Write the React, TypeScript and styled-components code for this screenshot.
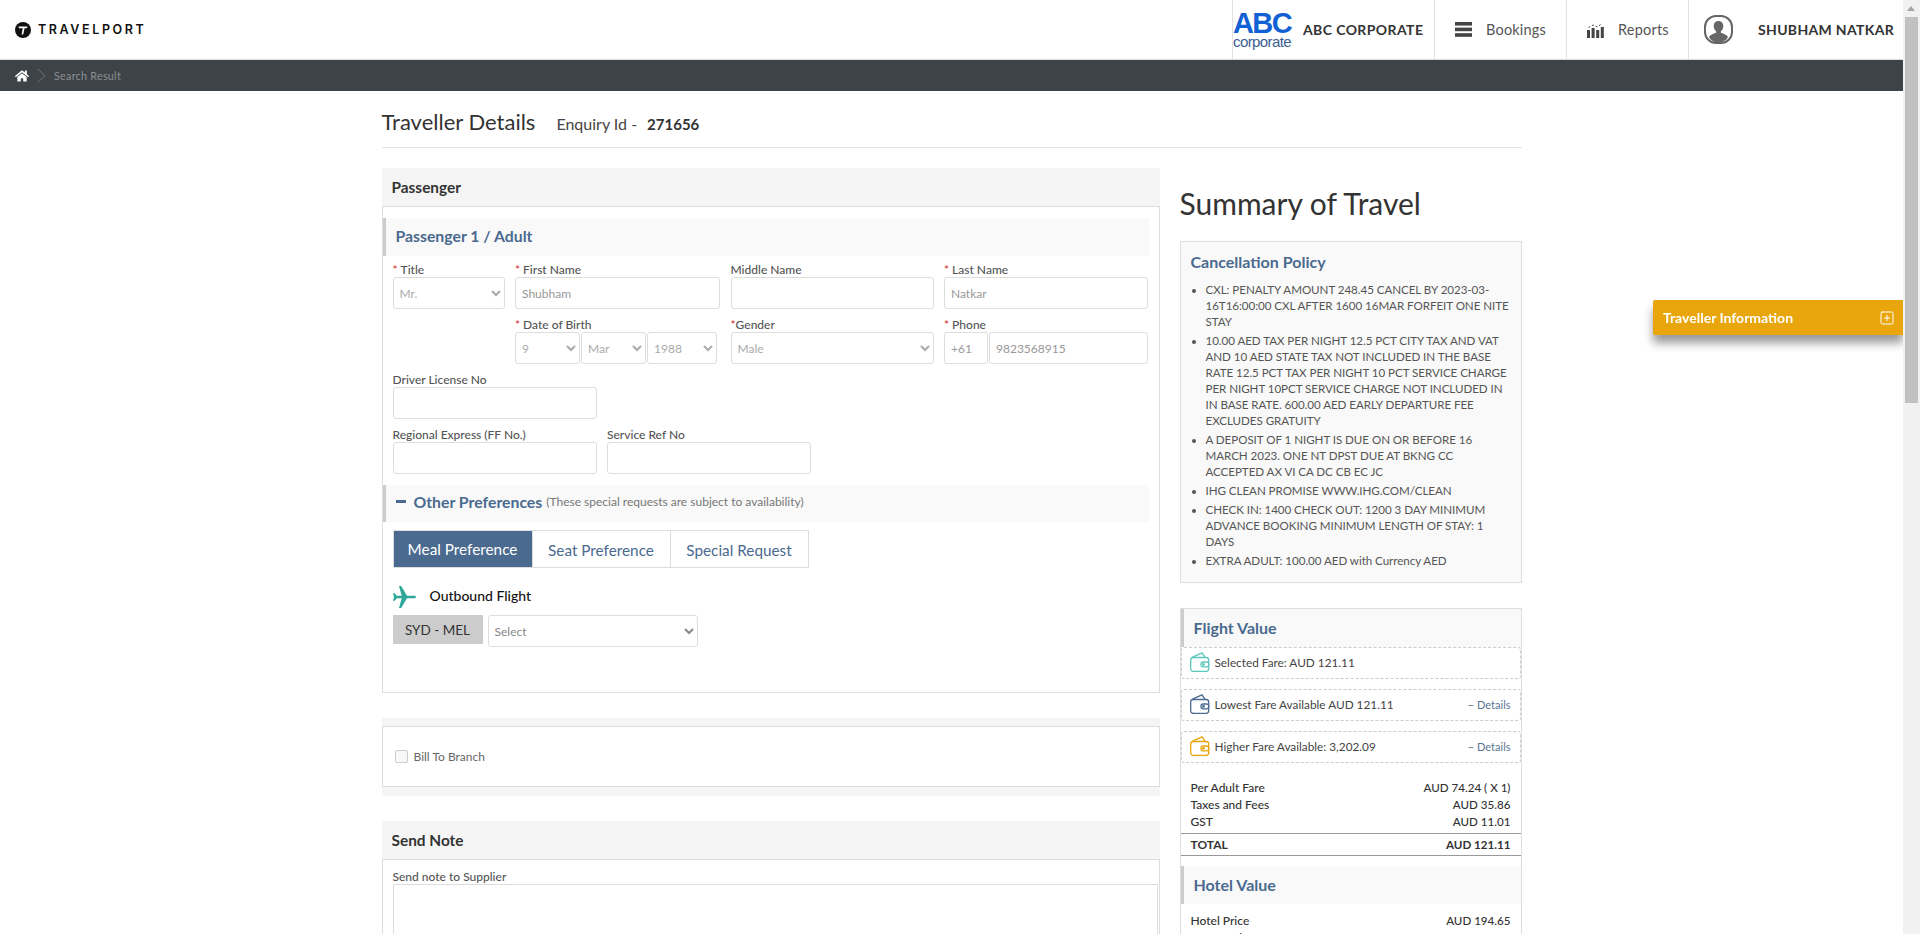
import React from 'react';
import styled, { createGlobalStyle } from 'styled-components';
import { FaHome } from 'react-icons/fa';
import { SquarePlus } from 'lucide-react';

const Global = createGlobalStyle`
  html, body { margin: 0; padding: 0; height: 934px; overflow: hidden; background: #fff; }
  body { font-family: Lato, "Open Sans", Arial, sans-serif; color: #333; }
  * { box-sizing: border-box; }
`;

const Page = styled.div`
  width: 1903px;
  height: 934px;
  overflow: hidden;
`;

const TopBar = styled.header`
  height: 60px;
  display: flex;
  align-items: stretch;
  justify-content: space-between;
  border-bottom: 1px solid #ddd;
  background: #fff;
`;

const Brand = styled.div`
  display: flex;
  align-items: center;
  gap: 7px;
  padding-left: 15px;
`;

const BrandName = styled.span`
  font-family: Inter, Arial, sans-serif;
  font-size: 12.5px;
  font-weight: 600;
  letter-spacing: 2.6px;
  color: #111;
`;

const TopNav = styled.nav`
  display: flex;
  align-items: stretch;
`;

const NavCell = styled.div<{ $w: number; $gap: number; $pl: number }>`
  width: ${p => p.$w}px;
  display: flex;
  align-items: center;
  gap: ${p => p.$gap}px;
  padding-left: ${p => p.$pl}px;
  border-left: 1px solid #e2e2e2;
`;

const CorpLogo = styled.div`
  width: 58px;
  display: flex;
  flex-direction: column;
  align-items: center;
  font-family: "Liberation Sans", Arial, sans-serif;
  line-height: 1;
`;

const CorpAbc = styled.span`
  font-size: 29px;
  font-weight: 700;
  letter-spacing: -1.6px;
  line-height: 25px;
  color: #1260d6;
`;

const CorpWord = styled.span`
  font-size: 15px;
  letter-spacing: -0.6px;
  line-height: 12px;
  color: #3c5d92;
`;

const CorpName = styled.span`
  font-size: 14px;
  font-weight: 700;
  letter-spacing: 0.4px;
  color: #333;
`;

const NavLink = styled.span`
  font-size: 14.5px;
  color: #555;
  letter-spacing: 0.2px;
`;

const UserName = styled.span`
  font-size: 14px;
  font-weight: 700;
  letter-spacing: 0.33px;
  color: #333;
`;

const Crumbs = styled.div`
  height: 31px;
  background: #3e4347;
  display: flex;
  align-items: center;
  gap: 8px;
  padding-left: 15px;
  color: #fff;
`;

const CrumbText = styled.span`
  font-size: 10.8px;
  color: #8a8f93;
  letter-spacing: 0.25px;
`;

const Wrap = styled.main`
  width: 1140px;
  margin: 0 auto;
`;

const TitleRow = styled.div`
  height: 57px;
  padding-top: 17px;
  display: flex;
  align-items: baseline;
  border-bottom: 1px solid #e4e4e4;
`;

const PageTitle = styled.h1`
  margin: 0 21px 0 0;
  font-size: 22px;
  font-weight: 400;
  color: #333;
`;

const EnquiryLabel = styled.span`
  font-size: 16px;
  color: #444;
`;

const EnquiryId = styled.b`
  margin-left: 10px;
  font-size: 15px;
  color: #333;
`;

const Columns = styled.div`
  display: grid;
  grid-template-columns: 778px 342px;
  column-gap: 20px;
  margin-top: 20px;
`;

const Panel = styled.section<{ $gap?: number }>`
  margin-top: ${p => p.$gap ?? 0}px;
`;

const PanelHead = styled.div`
  height: 38px;
  display: flex;
  align-items: center;
  padding-left: 10px;
  background: #f5f5f5;
  font-size: 15.4px;
  font-weight: 700;
  color: #333;
`;

const PanelBody = styled.div`
  border: 1px solid #ddd;
  padding: 11px 10px 45px 0;
  background: #fff;
`;

const SubHead = styled.div<{ $h: number }>`
  height: ${p => p.$h}px;
  display: flex;
  align-items: center;
  padding: 0 0 4px 10px;
  background: #f9f9f9;
  border-left: 3px solid #ccc;
  font-size: 15.8px;
  font-weight: 700;
  color: #4a6a8f;
`;

const FormGrid = styled.div`
  margin: 6px 0 0 10px;
  display: grid;
  grid-template-columns: 112px 205px 203px 203.5px;
  column-gap: 10.5px;
  row-gap: 8px;
`;

const Field = styled.div<{ $col?: number }>`
  grid-column: ${p => p.$col ?? 'auto'};
  min-width: 0;
`;

const Label = styled.label`
  display: block;
  height: 15px;
  line-height: 15px;
  font-size: 12px;
  font-weight: 500;
  color: #555;
  white-space: nowrap;
`;

const Req = styled.span<{ $tight?: boolean }>`
  color: #d33;
  margin-right: ${p => (p.$tight ? 0 : 3)}px;
`;

const TextInput = styled.input`
  display: block;
  width: 100%;
  height: 32px;
  padding: 0 6px;
  border: 1px solid #ddd;
  border-radius: 3px;
  background: #fff;
  font: 12px Lato, Arial, sans-serif;
  color: #999;
  outline: none;
`;

const Select = styled.select`
  display: block;
  width: 100%;
  min-width: 0;
  height: 32px;
  padding: 0 2px;
  border: 1px solid #ddd;
  border-radius: 3px;
  background: #fff;
  font: 12px Lato, Arial, sans-serif;
  color: #aaa;
  opacity: 1;
`;

const DobGroup = styled.div`
  display: grid;
  grid-template-columns: 65px 65px 70px;
  column-gap: 1px;
`;

const PhoneGroup = styled.div`
  display: grid;
  grid-template-columns: 44px 1fr;
  column-gap: 1px;
`;

const PairRow = styled.div`
  margin: 8px 0 0 10px;
  display: grid;
  grid-template-columns: 204px 204px;
  column-gap: 10.5px;
`;

const SingleRow = styled.div`
  margin: 8px 0 0 10px;
  width: 204px;
`;

const PrefHead = styled(SubHead)`
  margin-top: 11px;
  gap: 8px;
`;

const Minus = styled.span`
  width: 10px;
  height: 3px;
  background: #4a6a8f;
`;

const PrefNote = styled.span`
  margin-left: -4px;
  font-size: 12px;
  font-weight: 400;
  color: #777;
`;

const Tabs = styled.div`
  margin: 8px 0 0 10px;
  width: 416px;
  height: 38px;
  display: grid;
  grid-template-columns: repeat(3, 1fr);
  border: 1px solid #ddd;
`;

const Tab = styled.div<{ $on?: boolean }>`
  display: flex;
  align-items: center;
  justify-content: center;
  padding-top: ${p => (p.$on ? 0 : 2)}px;
  font-size: 15.3px;
  color: ${p => (p.$on ? '#fff' : '#4a6a8f')};
  background: ${p => (p.$on ? '#4a6a8f' : '#fff')};
  border-left: ${p => (p.$on ? 'none' : '1px solid #ddd')};
`;

const FlightLine = styled.div`
  margin: 18px 0 0 10px;
  height: 22px;
  display: flex;
  align-items: center;
  gap: 14px;
  font-size: 14px;
  font-weight: 500;
  color: #111;
`;

const FlightName = styled.span`
  padding-bottom: 3px;
`;

const RouteRow = styled.div`
  margin: 7px 0 0 10px;
  display: flex;
  align-items: flex-start;
  gap: 5px;
`;

const RouteTag = styled.div`
  width: 90px;
  height: 29px;
  display: flex;
  align-items: center;
  justify-content: center;
  background: #ccc;
  font-size: 13.5px;
  color: #333;
`;

const RouteSelect = styled(Select)`
  width: 210px;
  color: #888;
`;

const BillBlock = styled.section`
  margin-top: 25px;
  padding: 8px 0 9px;
  background: #f5f5f5;
`;

const BillBox = styled.div`
  height: 61px;
  display: flex;
  align-items: center;
  gap: 6px;
  padding-left: 12px;
  border: 1px solid #ddd;
  background: #fff;
  font-size: 12px;
  color: #666;
`;

const Check = styled.span`
  width: 13px;
  height: 13px;
  border: 1px solid #ccc;
  border-radius: 2px;
  background: #f8f8f8;
`;

const NoteBody = styled.div`
  height: 120px;
  border: 1px solid #ddd;
  border-bottom: none;
  padding: 9px 1px 0 10px;
`;

const NoteArea = styled.div`
  height: 100px;
  border: 1px solid #ddd;
`;

const SummaryTitle = styled.h2`
  margin: 0 0 3px;
  height: 70px;
  line-height: 70px;
  font-size: 30px;
  font-weight: 400;
  color: #333;
`;

const PolicyBox = styled.div`
  height: 342px;
  padding: 10px 10px 0;
  border: 1px solid #ddd;
  background: #f9f9f9;
`;

const PolicyTitle = styled.h3`
  margin: 0 0 10px;
  line-height: 20px;
  font-size: 16px;
  font-weight: 700;
  color: #4a6a8f;
`;

const PolicyList = styled.ul`
  margin: 0;
  padding-left: 15px;
`;

const PolicyItem = styled.li`
  margin-bottom: 3px;
  font-size: 11.6px;
  line-height: 16px;
  letter-spacing: -0.05px;
  white-space: nowrap;
  color: #555;
`;

const PolicyLine = styled.span`
  display: block;
`;

const ValueBox = styled.div`
  margin-top: 25px;
  border: 1px solid #ddd;
  border-bottom: none;
  padding-bottom: 20px;
`;

const ValueHead = styled.div`
  height: 38px;
  display: flex;
  align-items: center;
  padding: 0 0 2px 10px;
  background: #f9f9f9;
  border-left: 3px solid #ccc;
  font-size: 16px;
  font-weight: 700;
  color: #4a6a8f;
`;

const FareLine = styled.div<{ $gap?: number }>`
  margin-top: ${p => p.$gap ?? 0}px;
  height: 32px;
  display: flex;
  align-items: center;
  gap: 5px;
  padding: 0 9px 2px 8px;
  border: 1px dashed #ccc;
  border-radius: 3px;
  font-size: 11.8px;
  color: #444;
`;

const DetailsLink = styled.span`
  margin-left: auto;
  font-size: 11px;
  color: #5a7594;
`;

const PriceRows = styled.div<{ $top: number }>`
  margin-top: ${p => p.$top}px;
`;

const PriceRow = styled.div<{ $total?: boolean }>`
  height: ${p => (p.$total ? 23 : 17)}px;
  margin-top: ${p => (p.$total ? 3 : 0)}px;
  display: flex;
  align-items: center;
  justify-content: space-between;
  padding: 0 10px 0 10px;
  font-size: 12px;
  font-weight: ${p => (p.$total ? 700 : 500)};
  color: #333;
  border-top: ${p => (p.$total ? '1px solid #999' : 'none')};
  border-bottom: ${p => (p.$total ? '1px solid #999' : 'none')};
`;

const Amount = styled.span`
  font-size: 11.6px;
`;

const HotelHead = styled(ValueHead)`
  margin-top: 10px;
`;

const Drawer = styled.div`
  position: fixed;
  top: 300px;
  left: 1653px;
  width: 250px;
  height: 35px;
  display: flex;
  align-items: center;
  justify-content: space-between;
  padding: 0 8px 0 10px;
  background: #e8a60c;
  border-radius: 2px 0 0 2px;
  box-shadow: 0 8px 10px rgba(0, 0, 0, 0.4);
  font-size: 14px;
  font-weight: 700;
  color: #fff;
`;

const Track = styled.div`
  position: fixed;
  top: 0;
  right: 0;
  width: 17px;
  height: 934px;
  background: #f1f1f1;
`;

const Thumb = styled.div`
  position: absolute;
  top: 17px;
  left: 2px;
  width: 13px;
  height: 386px;
  background: #c1c1c1;
`;

const Arrow = styled.div`
  position: absolute;
  top: 6px;
  left: 4px;
  border-left: 4.5px solid transparent;
  border-right: 4.5px solid transparent;
  border-bottom: 5px solid #a3a3a3;
`;

const TravelportMark = () => (
  <svg width="16" height="16" viewBox="0 0 16 16">
    <circle cx="8" cy="8" r="8" fill="#111" />
    <path d="M3.5 4.6h9l-.6 1.6H9.6L8.2 12.4H6.6l1.2-6.2H4z" fill="#fff" />
  </svg>
);

const BarsIcon = () => (
  <svg width="17" height="15" viewBox="0 0 17 15" fill="#444">
    <rect width="17" height="3.6" />
    <rect y="5.6" width="17" height="3.6" />
    <rect y="11.2" width="17" height="3.6" />
  </svg>
);

const ReportIcon = () => (
  <svg width="17" height="16" viewBox="0 0 17 16" fill="#444">
    <rect x="0" y="8" width="3" height="8" />
    <rect x="4.6" y="6" width="3" height="10" />
    <rect x="9.2" y="8" width="3" height="8" />
    <rect x="13.8" y="5" width="3" height="11" />
    <path d="M1.5 5.500 6 3l4.700 2L15 1.200" stroke="#444" strokeWidth="1" strokeDasharray="2 2" fill="none" />
  </svg>
);

const AvatarIcon = () => (
  <svg width="29" height="29" viewBox="0 0 29 29">
    <rect x="1" y="1" width="27" height="27" rx="11" fill="#fff" stroke="#666" strokeWidth="2" />
    <path d="M14.5 6c-3 0-4.8 2.2-4.8 5.1 0 2.3 1 4.2 2.4 5.2v1.5c-2.8 1-6 2-7.100 4.200C6.700 25.600 10.300 27.500 14.500 27.500s7.800-1.900 9.500-5.500c-1.100-2.200-4.300-3.200-7.100-4.200v-1.500c1.400-1 2.400-2.900 2.400-5.200C19.300 8.200 17.500 6 14.500 6z" fill="#666" />
  </svg>
);

const CrumbArrow = () => (
  <svg width="9" height="15" viewBox="0 0 9 15" fill="none" stroke="#6a6f73" strokeWidth="1">
    <path d="M1 1l7 7-7 6" />
  </svg>
);

const PlaneIcon = () => (
  <svg width="23" height="22" viewBox="0 0 23 22" fill="#2fa79b">
    <path d="M23 11c0-.8-1-1.300-2.200-1.300H14L8.200 0H6l2.700 9.700H3.600L1.700 7.200H0l1 3.800-1 3.800h1.700l1.900-2.500h5.100L6 22h2.200L14 12.300h6.800C22 12.300 23 11.800 23 11z" />
  </svg>
);

const WalletIcon = ({ color }: { color: string }) => (
  <svg width="20" height="20" viewBox="0 0 20 20" fill="none" stroke={color} strokeWidth="1.300">
    <rect x="0.700" y="5.500" width="18" height="13.800" rx="2.500" />
    <path d="M2.500 5.200 12 0.900 15 5.200" />
    <rect x="11" y="10" width="7.700" height="4.800" rx="2" fill="#fff" />
    <circle cx="13.500" cy="12.400" r="0.800" />
  </svg>
);

// line breaks follow the reference, the substitute font would wrap them differently
const policy = [
  ['CXL: PENALTY AMOUNT 248.45 CANCEL BY 2023-03-', '16T16:00:00 CXL AFTER 1600 16MAR FORFEIT ONE NITE', 'STAY'],
  [
    '10.00 AED TAX PER NIGHT 12.5 PCT CITY TAX AND VAT',
    'AND 10 AED STATE TAX NOT INCLUDED IN THE BASE',
    'RATE 12.5 PCT TAX PER NIGHT 10 PCT SERVICE CHARGE',
    'PER NIGHT 10PCT SERVICE CHARGE NOT INCLUDED IN',
    'IN BASE RATE. 600.00 AED EARLY DEPARTURE FEE',
    'EXCLUDES GRATUITY',
  ],
  ['A DEPOSIT OF 1 NIGHT IS DUE ON OR BEFORE 16', 'MARCH 2023. ONE NT DPST DUE AT BKNG CC', 'ACCEPTED AX VI CA DC CB EC JC'],
  ['IHG CLEAN PROMISE WWW.IHG.COM/CLEAN'],
  ['CHECK IN: 1400 CHECK OUT: 1200 3 DAY MINIMUM', 'ADVANCE BOOKING MINIMUM LENGTH OF STAY: 1', 'DAYS'],
  ['EXTRA ADULT: 100.00 AED with Currency AED'],
];

const Choice = ({ value }: { value: string }) => (
  <Select disabled defaultValue={value}>
    <option>{value}</option>
  </Select>
);

export default function App() {
  return (
    <Page>
      <Global />
      <TopBar>
        <Brand>
          <TravelportMark />
          <BrandName>TRAVELPORT</BrandName>
        </Brand>
        <TopNav>
          <NavCell $w={202} $gap={12} $pl={0}>
            <CorpLogo>
              <CorpAbc>ABC</CorpAbc>
              <CorpWord>corporate</CorpWord>
            </CorpLogo>
            <CorpName>ABC CORPORATE</CorpName>
          </NavCell>
          <NavCell $w={132} $gap={14} $pl={20}>
            <BarsIcon />
            <NavLink>Bookings</NavLink>
          </NavCell>
          <NavCell $w={122} $gap={14} $pl={20}>
            <ReportIcon />
            <NavLink>Reports</NavLink>
          </NavCell>
          <NavCell $w={215} $gap={25} $pl={15}>
            <AvatarIcon />
            <UserName>SHUBHAM NATKAR</UserName>
          </NavCell>
        </TopNav>
      </TopBar>
      <Crumbs>
        <FaHome size={14} />
        <CrumbArrow />
        <CrumbText>Search Result</CrumbText>
      </Crumbs>

      <Wrap>
        <TitleRow>
          <PageTitle>Traveller Details</PageTitle>
          <EnquiryLabel>Enquiry Id -</EnquiryLabel>
          <EnquiryId>271656</EnquiryId>
        </TitleRow>

        <Columns>
          <div>
            <Panel>
              <PanelHead>Passenger</PanelHead>
              <PanelBody>
                <SubHead $h={38}>Passenger 1 / Adult</SubHead>
                <FormGrid>
                  <Field>
                    <Label><Req>*</Req>Title</Label>
                    <Choice value="Mr." />
                  </Field>
                  <Field>
                    <Label><Req>*</Req>First Name</Label>
                    <TextInput readOnly defaultValue="Shubham" />
                  </Field>
                  <Field>
                    <Label>Middle Name</Label>
                    <TextInput readOnly />
                  </Field>
                  <Field>
                    <Label><Req>*</Req>Last Name</Label>
                    <TextInput readOnly defaultValue="Natkar" />
                  </Field>
                  <Field $col={2}>
                    <Label><Req>*</Req>Date of Birth</Label>
                    <DobGroup>
                      <Choice value="9" />
                      <Choice value="Mar" />
                      <Choice value="1988" />
                    </DobGroup>
                  </Field>
                  <Field>
                    <Label><Req $tight>*</Req>Gender</Label>
                    <Choice value="Male" />
                  </Field>
                  <Field>
                    <Label><Req>*</Req>Phone</Label>
                    <PhoneGroup>
                      <TextInput readOnly defaultValue="+61" />
                      <TextInput readOnly defaultValue="9823568915" />
                    </PhoneGroup>
                  </Field>
                </FormGrid>
                <SingleRow>
                  <Label>Driver License No</Label>
                  <TextInput readOnly />
                </SingleRow>
                <PairRow>
                  <Field>
                    <Label>Regional Express (FF No.)</Label>
                    <TextInput readOnly />
                  </Field>
                  <Field>
                    <Label>Service Ref No</Label>
                    <TextInput readOnly />
                  </Field>
                </PairRow>
                <PrefHead $h={37}>
                  <Minus />
                  Other Preferences
                  <PrefNote>(These special requests are subject to availability)</PrefNote>
                </PrefHead>
                <Tabs>
                  <Tab $on>Meal Preference</Tab>
                  <Tab>Seat Preference</Tab>
                  <Tab>Special Request</Tab>
                </Tabs>
                <FlightLine>
                  <PlaneIcon />
                  <FlightName>Outbound Flight</FlightName>
                </FlightLine>
                <RouteRow>
                  <RouteTag>SYD - MEL</RouteTag>
                  <RouteSelect disabled defaultValue="Select">
                    <option>Select</option>
                  </RouteSelect>
                </RouteRow>
              </PanelBody>
            </Panel>

            <BillBlock>
              <BillBox>
                <Check />
                Bill To Branch
              </BillBox>
            </BillBlock>

            <Panel $gap={25}>
              <PanelHead>Send Note</PanelHead>
              <NoteBody>
                <Label>Send note to Supplier</Label>
                <NoteArea />
              </NoteBody>
            </Panel>
          </div>

          <aside>
            <SummaryTitle>Summary of Travel</SummaryTitle>
            <PolicyBox>
              <PolicyTitle>Cancellation Policy</PolicyTitle>
              <PolicyList>
                {policy.map(lines => (
                  <PolicyItem key={lines[0]}>
                    {lines.map(line => (
                      <PolicyLine key={line}>{line}</PolicyLine>
                    ))}
                  </PolicyItem>
                ))}
              </PolicyList>
            </PolicyBox>

            <ValueBox>
              <ValueHead>Flight Value</ValueHead>
              <FareLine>
                <WalletIcon color="#5cc8bb" />
                Selected Fare: AUD 121.11
              </FareLine>
              <FareLine $gap={10}>
                <WalletIcon color="#4a6a8f" />
                Lowest Fare Available AUD 121.11
                <DetailsLink>− Details</DetailsLink>
              </FareLine>
              <FareLine $gap={10}>
                <WalletIcon color="#e8a60c" />
                Higher Fare Available: 3,202.09
                <DetailsLink>− Details</DetailsLink>
              </FareLine>
              <PriceRows $top={16}>
                <PriceRow><span>Per Adult Fare</span><Amount>AUD 74.24 ( X 1)</Amount></PriceRow>
                <PriceRow><span>Taxes and Fees</span><Amount>AUD 35.86</Amount></PriceRow>
                <PriceRow><span>GST</span><Amount>AUD 11.01</Amount></PriceRow>
                <PriceRow $total><span>TOTAL</span><Amount>AUD 121.11</Amount></PriceRow>
              </PriceRows>
              <HotelHead>Hotel Value</HotelHead>
              <PriceRows $top={8}>
                <PriceRow><span>Hotel Price</span><Amount>AUD 194.65</Amount></PriceRow>
                <PriceRow><span>Taxes and Fees</span><Amount>AUD 23.10</Amount></PriceRow>
              </PriceRows>
            </ValueBox>
          </aside>
        </Columns>
      </Wrap>

      <Drawer>
        Traveller Information
        <SquarePlus size={16} strokeWidth={1.5} />
      </Drawer>
      <Track>
        <Arrow />
        <Thumb />
      </Track>
    </Page>
  );
}
